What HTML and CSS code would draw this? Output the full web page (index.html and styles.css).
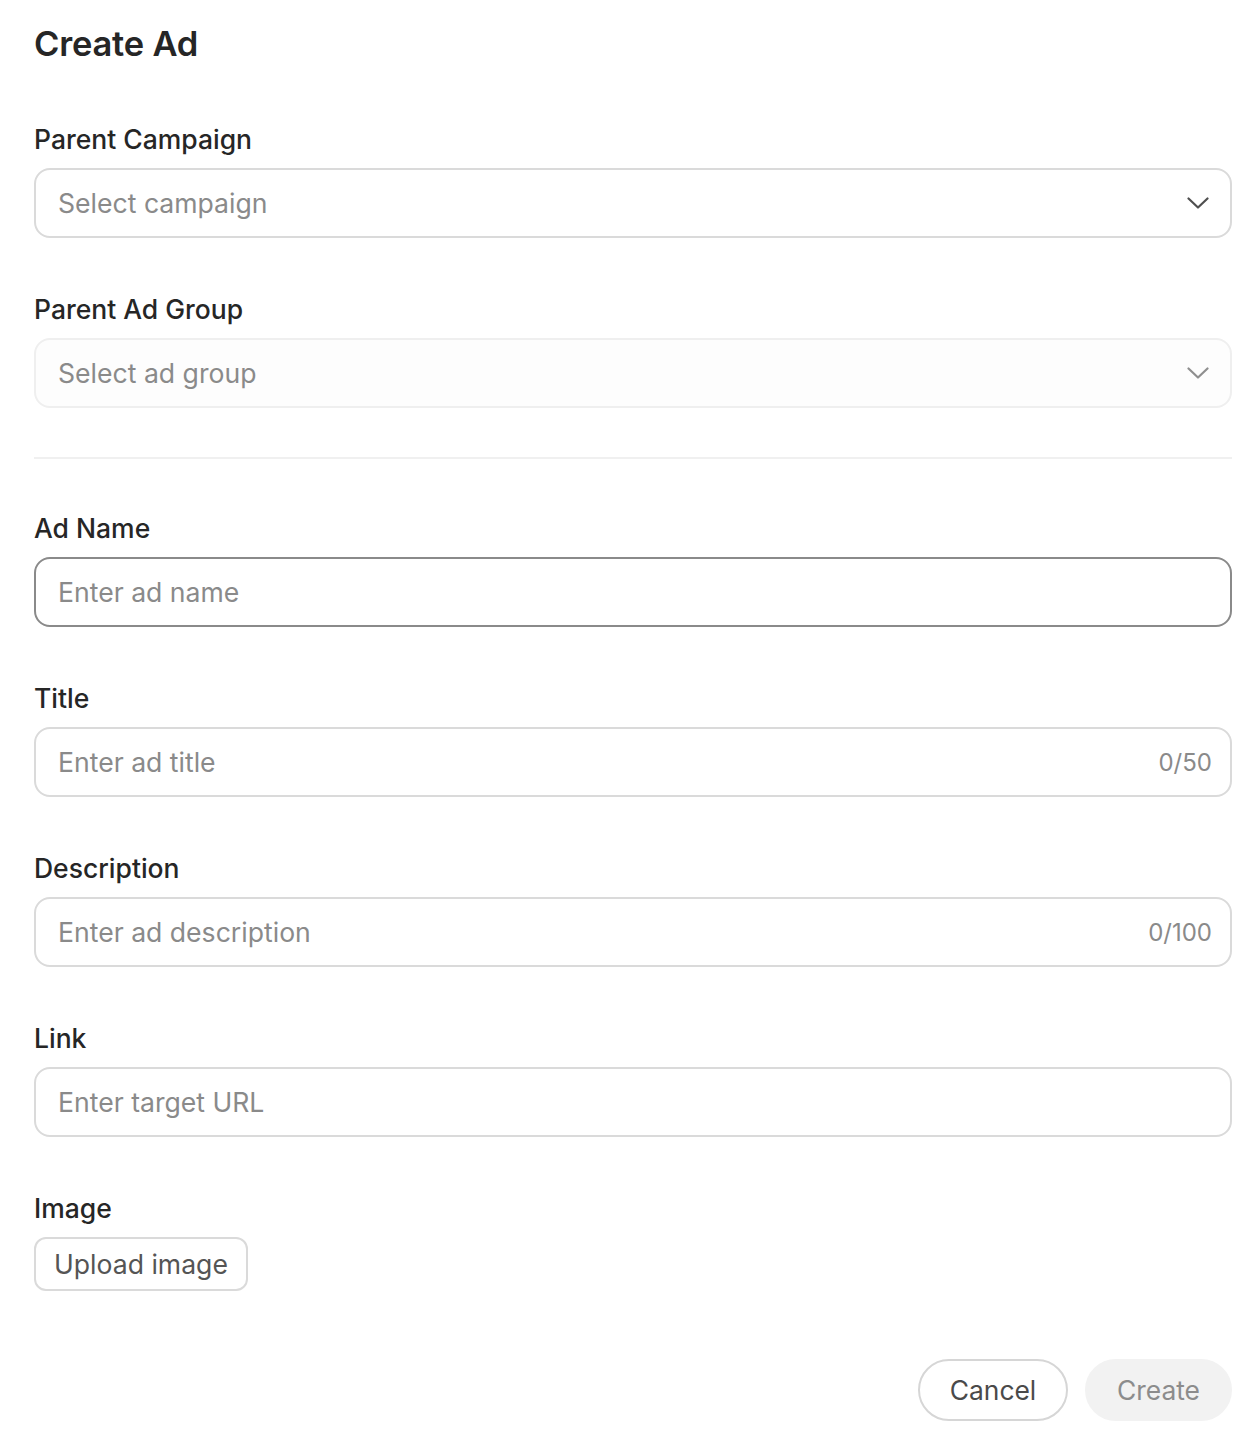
FILE: index.html
```html
<!DOCTYPE html>
<html lang="en">
<head>
<meta charset="utf-8">
<title>Create Ad</title>
<link rel="stylesheet" href="styles.css">
</head>
<body>
<main class="page">
  <h1 class="title">Create Ad</h1>

  <div class="field">
    <label class="label">Parent Campaign</label>
    <div class="control select">
      <span class="placeholder">Select campaign</span>
      <svg class="chevron" width="22" height="12" viewBox="0 0 22 12"><path d="M1.5 1.5 L11 10.5 L20.5 1.5" fill="none" stroke="currentColor" stroke-width="2.2" stroke-linecap="round" stroke-linejoin="round"/></svg>
    </div>
  </div>

  <div class="field">
    <label class="label">Parent Ad Group</label>
    <div class="control select disabled">
      <span class="placeholder">Select ad group</span>
      <svg class="chevron" width="22" height="12" viewBox="0 0 22 12"><path d="M1.5 1.5 L11 10.5 L20.5 1.5" fill="none" stroke="currentColor" stroke-width="2.2" stroke-linecap="round" stroke-linejoin="round"/></svg>
    </div>
  </div>

  <hr class="divider">

  <div class="field">
    <label class="label">Ad Name</label>
    <div class="control focused">
      <span class="placeholder">Enter ad name</span>
    </div>
  </div>

  <div class="field">
    <label class="label">Title</label>
    <div class="control">
      <span class="placeholder">Enter ad title</span>
      <span class="counter">0/50</span>
    </div>
  </div>

  <div class="field">
    <label class="label">Description</label>
    <div class="control">
      <span class="placeholder">Enter ad description</span>
      <span class="counter">0/100</span>
    </div>
  </div>

  <div class="field">
    <label class="label">Link</label>
    <div class="control">
      <span class="placeholder">Enter target URL</span>
    </div>
  </div>

  <div class="field">
    <label class="label">Image</label>
    <div><button class="upload">Upload image</button></div>
  </div>

  <div class="actions">
    <button class="btn btn-cancel">Cancel</button>
    <button class="btn btn-create">Create</button>
  </div>
</main>
</body>
</html>
```

FILE: styles.css
```css
* { box-sizing: border-box; }

html, body {
  margin: 0;
  padding: 0;
  background: #ffffff;
}

body {
  font-family: "Inter", "Liberation Sans", sans-serif;
  color: #242424;
}

.page {
  padding: 24px 22px 16px 34px;
  display: flex;
  flex-direction: column;
}

.title {
  margin: 0 0 59px 0;
  font-size: 34.5px;
  line-height: 40px;
  font-weight: 600;
  color: #262626;
  letter-spacing: -0.2px;
}

.field {
  display: flex;
  flex-direction: column;
  gap: 13px;
  margin-bottom: 55px;
}

.label {
  font-size: 26.5px;
  line-height: 32px;
  font-weight: 450;
  color: #262626;
}

.control {
  height: 70px;
  border: 2px solid #dadada;
  border-radius: 16px;
  padding: 0 18px 0 22px;
  display: flex;
  align-items: center;
  justify-content: space-between;
  background: #ffffff;
}

.control.disabled {
  border-color: #efefef;
  background: #fdfdfd;
}

.control.focused {
  border-color: #8a8a8a;
}

.placeholder {
  font-size: 26.6px;
  color: #8a8a8a;
}

.counter {
  font-size: 24px;
  color: #8a8a8a;
}

.chevron {
  color: #4f4f4f;
  margin-right: 3px;
}

.disabled .chevron {
  color: #8f8f8f;
}

.divider {
  margin: -6px 0 53px 0;
  border: 0;
  height: 2px;
  background: #f0f0f0;
}

.upload {
  font-family: inherit;
  height: 54px;
  padding: 0 18px;
  border: 2px solid #dadada;
  border-radius: 12px;
  background: #ffffff;
  font-size: 26.6px;
  color: #555555;
}

.actions {
  display: flex;
  justify-content: flex-end;
  gap: 17px;
  margin-top: 13px;
}

.btn {
  font-family: inherit;
  height: 62px;
  border-radius: 31px;
  font-size: 26.4px;
  padding: 0 20px;
}

.btn-cancel {
  width: 150px;
  background: #ffffff;
  border: 2px solid #d6d6d6;
  color: #4a4a4a;
}

.btn-create {
  width: 147px;
  background: #f2f2f2;
  border: 2px solid #f2f2f2;
  color: #8c8c8c;
}
```
